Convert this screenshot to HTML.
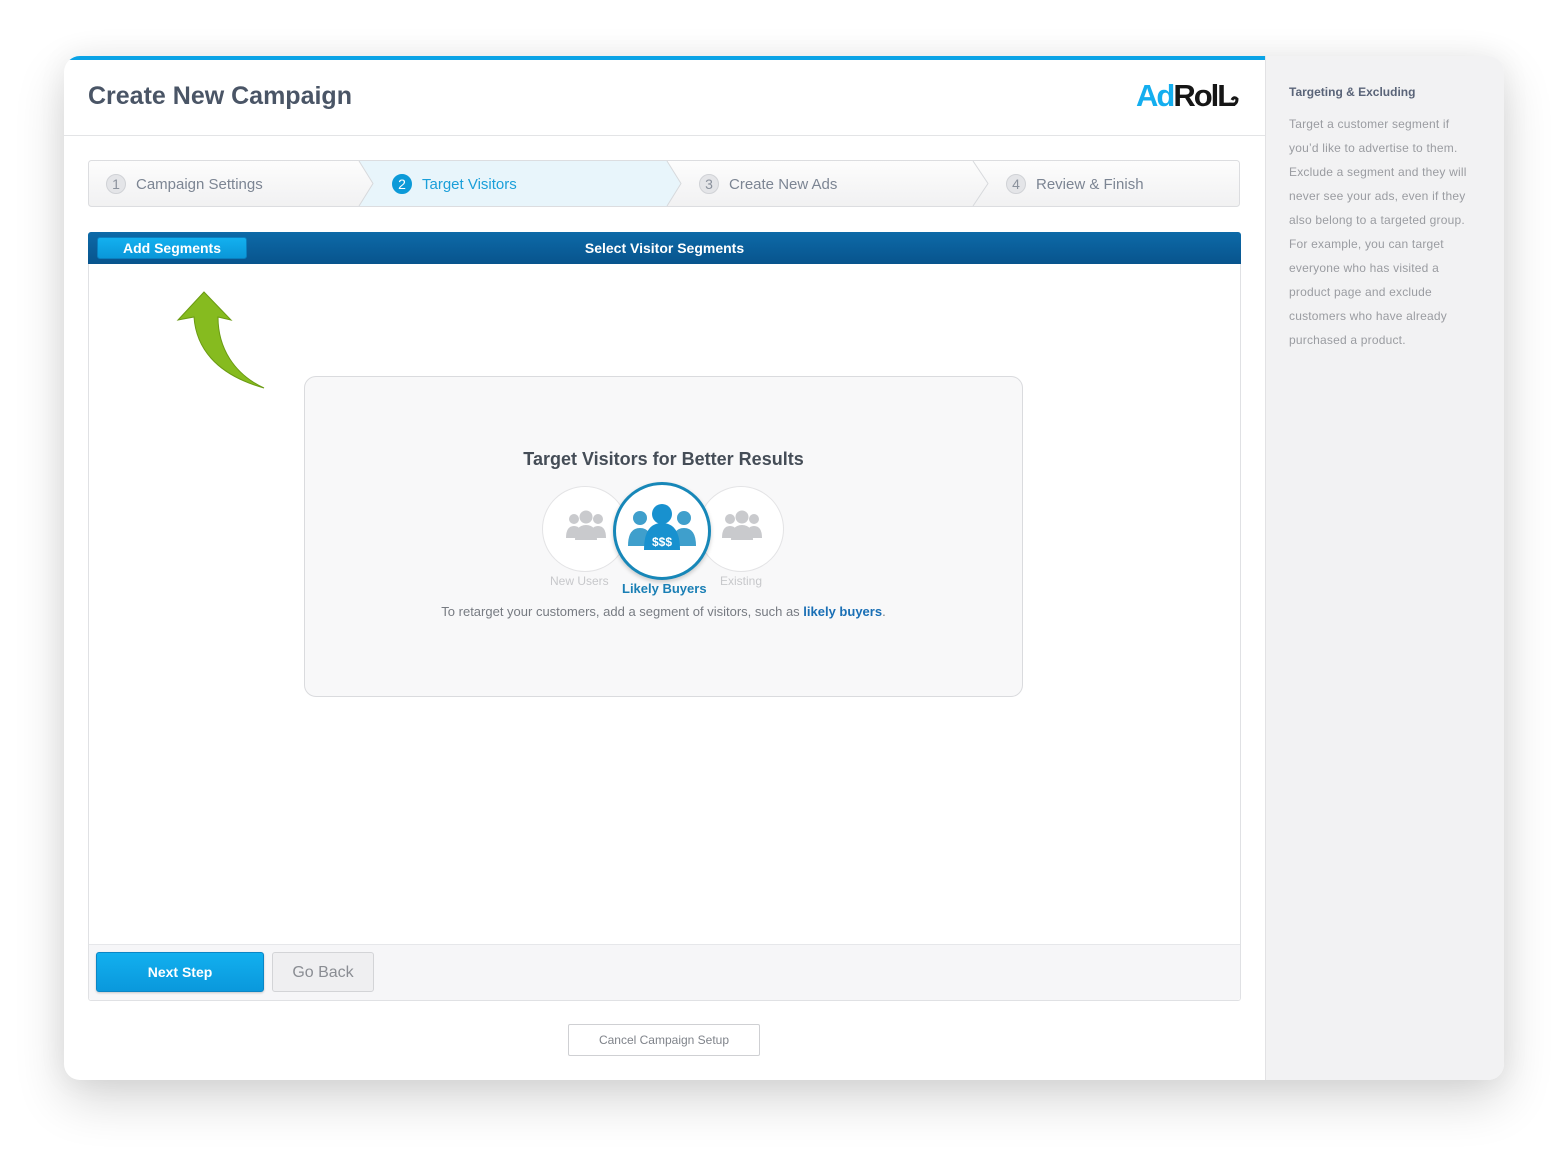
<!DOCTYPE html>
<html><head><style>
*{box-sizing:border-box;margin:0;padding:0}
body{width:1568px;height:1152px;background:#fff;font-family:"Liberation Sans",sans-serif;position:relative;overflow:hidden}
.card{position:absolute;left:64px;top:56px;width:1440px;height:1024px;border-radius:16px;background:#fff;box-shadow:0 20px 50px rgba(0,0,0,.16),0 0 30px rgba(0,0,0,.06);overflow:hidden}
.side{position:absolute;left:1201px;top:0;width:239px;height:1024px;background:#f2f2f3;border-left:1px solid #e2e2e4}
.topline{position:absolute;left:0;top:0;width:1201px;height:4px;background:#0aa3e6}
.abs{position:absolute}
.stepnum{position:absolute;width:20px;height:20px;border-radius:50%;background:#e4e5e8;border:1px solid #d0d2d6;color:#8a919c;font-size:14px;text-align:center;line-height:18px}
.steptxt{position:absolute;font-size:15px;color:#7c8593}
</style></head><body>
<div class="card">
<div class="topline"></div>
<div class="abs" style="left:24px;top:26px;font-size:25px;font-weight:bold;color:#4a5566">Create New Campaign</div>
<div class="abs" style="left:1072px;top:22px;font-size:31px;font-weight:bold;letter-spacing:-2px"><span style="color:#14aeef">Ad</span><span style="color:#161616">RolL</span></div>
<svg class="abs" style="left:1163px;top:36px" width="14" height="16"><path d="M2,12 Q10,14 10,7 Q7,4 5,8" fill="none" stroke="#161616" stroke-width="3"/></svg>
<div class="abs" style="left:0;top:79px;width:1201px;height:1px;background:#e3e4e6"></div>
<svg class="abs" style="left:24px;top:104px" width="1153" height="48">
<defs><linearGradient id="g" x1="0" y1="0" x2="0" y2="1"><stop offset="0" stop-color="#fdfdfd"/><stop offset="1" stop-color="#f1f1f2"/></linearGradient></defs>
<rect x="0.5" y="0.5" width="1151" height="46" rx="3" fill="url(#g)" stroke="#dcdde0"/>
<polygon points="271,1 579,1 593,23.5 579,46 271,46 285,23.5" fill="#e8f5fb"/>
<polyline points="271,1 285,23.5 271,46" fill="none" stroke="#d7d9dc"/>
<polyline points="579,1 593,23.5 579,46" fill="none" stroke="#d7d9dc"/>
<polyline points="885,1 900,23.5 885,46" fill="none" stroke="#d7d9dc"/>
</svg>
<div class="stepnum" style="left:42px;top:118px">1</div><div class="steptxt" style="left:72px;top:120px">Campaign Settings</div>
<div class="stepnum" style="left:328px;top:118px;background:#0c9ad8;border-color:#0c9ad8;color:#fff">2</div><div class="steptxt" style="left:358px;top:120px;color:#1a9fd9">Target Visitors</div>
<div class="stepnum" style="left:635px;top:118px">3</div><div class="steptxt" style="left:665px;top:120px">Create New Ads</div>
<div class="stepnum" style="left:942px;top:118px">4</div><div class="steptxt" style="left:972px;top:120px">Review &amp; Finish</div>
<div class="abs" style="left:24px;top:176px;width:1153px;height:769px;border:1px solid #e0e1e4;border-radius:3px;background:#fff"></div>
<div class="abs" style="left:24px;top:176px;width:1153px;height:32px;background:linear-gradient(#0d6aa8,#08548d);border-radius:3px 3px 0 0"></div>
<div class="abs" style="left:33px;top:181px;width:150px;height:22px;background:linear-gradient(#13b0ef,#0a97d9);border-radius:3px;border:1px solid #0a7fbf;color:#fff;font-weight:bold;font-size:14px;text-align:center;line-height:20px">Add Segments</div>
<div class="abs" style="left:24px;top:184px;width:1153px;text-align:center;color:#fff;font-weight:bold;font-size:14px">Select Visitor Segments</div>
<svg class="abs" style="left:110px;top:230px" width="100" height="110">
<path d="M30,6 L4,34 L20,31 C22,60 40,88 90,102 C60,88 44,62 44,31 L57,34 Z" fill="#86bb1f" stroke="#6a9a12" stroke-width="1"/>
</svg>
<div class="abs" style="left:240px;top:320px;width:719px;height:321px;border:1px solid #dadbde;border-radius:12px;background:#f8f8f9"></div>
<div class="abs" style="left:240px;top:393px;width:719px;text-align:center;font-size:18px;font-weight:bold;color:#454d57">Target Visitors for Better Results</div>
<div class="abs" style="left:478px;top:430px;width:86px;height:86px;border-radius:50%;background:#fff;border:1px solid #e3e3e5"></div>
<div class="abs" style="left:634px;top:430px;width:86px;height:86px;border-radius:50%;background:#fff;border:1px solid #e3e3e5"></div>
<svg class="abs" style="left:500px;top:452px" width="44" height="34"><g fill="#c9cacd"><circle cx="10" cy="11" r="5"/><circle cx="34" cy="11" r="5"/><path d="M2,30 q0,-12 8,-12 q8,0 8,12z M26,30 q0,-12 8,-12 q8,0 8,12z"/><circle cx="22" cy="9" r="6.5"/><path d="M11,32 q0,-15 11,-15 q11,0 11,15z"/></g></svg>
<svg class="abs" style="left:656px;top:452px" width="44" height="34"><g fill="#c9cacd"><circle cx="10" cy="11" r="5"/><circle cx="34" cy="11" r="5"/><path d="M2,30 q0,-12 8,-12 q8,0 8,12z M26,30 q0,-12 8,-12 q8,0 8,12z"/><circle cx="22" cy="9" r="6.5"/><path d="M11,32 q0,-15 11,-15 q11,0 11,15z"/></g></svg>
<div class="abs" style="left:549px;top:426px;width:98px;height:98px;border-radius:50%;background:#fff;border:3px solid #1787b8;box-shadow:0 2px 4px rgba(0,0,0,.2)"></div>
<svg class="abs" style="left:562px;top:446px" width="72" height="50"><g fill="#3f9fcc"><circle cx="14" cy="16" r="7"/><circle cx="58" cy="16" r="7"/><path d="M2,44 q0,-18 12,-18 q12,0 12,18z M46,44 q0,-18 12,-18 q12,0 12,18z"/></g><g fill="#1891cf"><circle cx="36" cy="12" r="10"/><path d="M18,48 q0,-27 18,-27 q18,0 18,27z"/></g><text x="36" y="44" font-size="12" font-weight="bold" fill="#fff" text-anchor="middle" font-family="Liberation Sans">$$$</text></svg>
<div class="abs" style="left:486px;top:518px;font-size:12px;color:#c7c8cb">New Users</div>
<div class="abs" style="left:558px;top:525px;font-size:13px;font-weight:bold;color:#1a7fb5">Likely Buyers</div>
<div class="abs" style="left:656px;top:518px;font-size:12px;color:#c7c8cb">Existing</div>
<div class="abs" style="left:240px;top:548px;width:719px;text-align:center;font-size:13px;color:#777b82">To retarget your customers, add a segment of visitors, such as <b style="color:#1a6fb5">likely buyers</b>.</div>
<div class="abs" style="left:25px;top:888px;width:1151px;height:56px;background:#f6f6f8;border-top:1px solid #e6e7ea;border-radius:0 0 3px 3px"></div>
<div class="abs" style="left:32px;top:896px;width:168px;height:40px;background:linear-gradient(#12b0ef,#0a98dc);border:1px solid #0a86c6;border-radius:3px;color:#fff;font-weight:bold;font-size:14px;text-align:center;line-height:38px;box-shadow:0 1px 2px rgba(0,0,0,.2)">Next Step</div>
<div class="abs" style="left:208px;top:896px;width:102px;height:40px;background:#efeff1;border:1px solid #d3d4d7;border-radius:3px;color:#8a8d93;font-size:16px;text-align:center;line-height:40px">Go Back</div>
<div class="abs" style="left:504px;top:968px;width:192px;height:32px;border:1px solid #cfd0d3;border-radius:2px;color:#7f838a;font-size:12px;text-align:center;line-height:30px">Cancel Campaign Setup</div>
<div class="side">
<div class="abs" style="left:23px;top:29px;font-size:12px;font-weight:bold;color:#5a6478">Targeting &amp; Excluding</div>
<div class="abs" style="left:23px;top:56px;width:220px;font-size:12px;line-height:24px;color:#9a9ca1;letter-spacing:0.2px;white-space:nowrap">Target a customer segment if<br>you’d like to advertise to them.<br>Exclude a segment and they will<br>never see your ads, even if they<br>also belong to a targeted group.<br>For example, you can target<br>everyone who has visited a<br>product page and exclude<br>customers who have already<br>purchased a product.</div>
</div>
</div>
</body></html>
